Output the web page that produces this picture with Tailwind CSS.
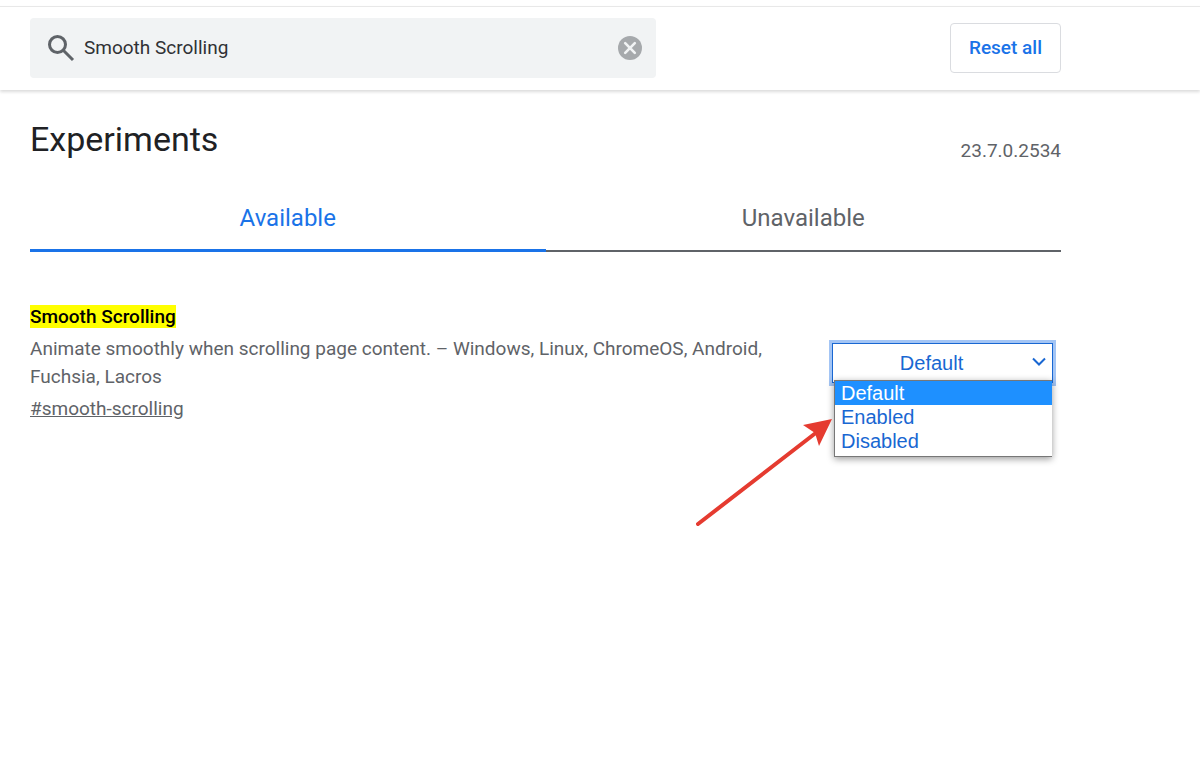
<!DOCTYPE html>
<html lang="en">
  <head>
    <meta charset="UTF-8" />
    <meta name="viewport" content="width=device-width, initial-scale=1.0" />
    <title>Experiments</title>
    <script src="https://cdn.jsdelivr.net/npm/@tailwindcss/browser@4"></script>
  </head>
  <body class="min-h-screen bg-white pt-[6px] font-['Roboto',sans-serif] text-[#5f6368]">
    <!-- Header -->
    <header class="border-t border-[#e8e8e8] pt-[11px] pb-3 pl-[30px] shadow-[0_2px_3px_rgba(0,0,0,0.14)]">
      <div class="flex max-w-[1031px] items-center justify-between">
        <!-- Search bar -->
        <form class="flex h-[60px] w-full max-w-[626px] items-center rounded bg-[#f1f3f4] pr-[14px] pl-[17px]">
          <label for="search" class="shrink-0">
            <svg class="h-7 w-7" viewBox="0 0 28 28" fill="none" stroke="#5f6368" stroke-width="3" role="img" aria-label="Search flags">
              <circle cx="10.5" cy="10.5" r="8" />
              <path d="M16.5 16.5L26 26" />
            </svg>
          </label>
          <input id="search" type="text" value="Smooth Scrolling" class="ml-[9px] min-w-0 flex-1 bg-transparent text-[19px] text-[#303134] outline-none" />
          <button type="button" aria-label="Clear search">
            <svg class="h-6 w-6" viewBox="0 0 24 24">
              <circle cx="12" cy="12" r="12" fill="#a6a9ac" />
              <path d="M7.2 7.2l9.6 9.6M16.8 7.2l-9.6 9.6" stroke="#f1f3f4" stroke-width="2.6" stroke-linecap="round" />
            </svg>
          </button>
        </form>
        <button type="button" class="h-[50px] rounded border border-[#dadce0] px-[18px] text-[19px] font-medium text-[#1a73e8]">Reset all</button>
      </div>
    </header>

    <main class="max-w-[1061px] pl-[30px]">
      <div class="flex items-end justify-between pt-[25px]">
        <h1 class="text-[34px] leading-[48px] text-[#202124]">Experiments</h1>
        <span class="text-[19px] leading-6">23.7.0.2534</span>
      </div>

      <!-- Tabs -->
      <div class="mt-[19px] grid grid-cols-2 text-center text-[24px]">
        <button type="button" class="h-[70px] border-b-3 border-[#1a73e8] pt-1 text-[#1a73e8]">Available</button>
        <button type="button" class="h-[70px] border-b-2 border-[#5f6368] pt-1">Unavailable</button>
      </div>

      <!-- Experiment -->
      <section class="mt-[51px] flex items-center justify-between pr-2">
        <div class="max-w-[760px] text-[19px] leading-7">
          <h2 class="mb-1 font-medium text-black"><mark class="bg-[#ffff00]">Smooth Scrolling</mark></h2>
          <p class="mb-1">Animate smoothly when scrolling page content. – Windows, Linux, ChromeOS, Android, Fuchsia, Lacros</p>
          <a href="#smooth-scrolling" class="underline">#smooth-scrolling</a>
        </div>
        <div class="relative w-[221px] font-['Liberation_Sans',sans-serif] text-[20px] text-[#1967d2]">
          <select aria-label="Smooth Scrolling" class="block h-10 w-full appearance-none border border-[#1967d2] bg-white pr-[22px] pb-px text-center outline-3 outline-[#a3c5f5]">
            <option>Default</option>
            <option>Enabled</option>
            <option>Disabled</option>
          </select>
          <svg class="pointer-events-none absolute top-[13px] right-[7px] h-3 w-[14px]" viewBox="0 0 14 12" fill="none" stroke="#1967d2" stroke-width="2">
            <path d="M1 2.5l6 6 6-6" />
          </svg>
          <ul class="absolute top-[37px] right-px left-[2px] border border-r-0 border-[#777] bg-white pb-[3px] leading-6 shadow-[0_2px_7px_rgba(0,0,0,0.4)]">
            <li class="bg-[#1e90ff] px-[6px] text-white">Default</li>
            <li class="px-[6px]">Enabled</li>
            <li class="px-[6px]">Disabled</li>
          </ul>
          <svg class="pointer-events-none absolute top-[76px] right-[220px] h-[108px] w-[137px]" viewBox="0 0 137 108">
            <path d="M2 105L121 13" stroke="#e53b30" stroke-width="4" stroke-linecap="round" />
            <path d="M136 0L107 6L119 14L123 27Z" fill="#e53b30" />
          </svg>
        </div>
      </section>
    </main>
  </body>
</html>
